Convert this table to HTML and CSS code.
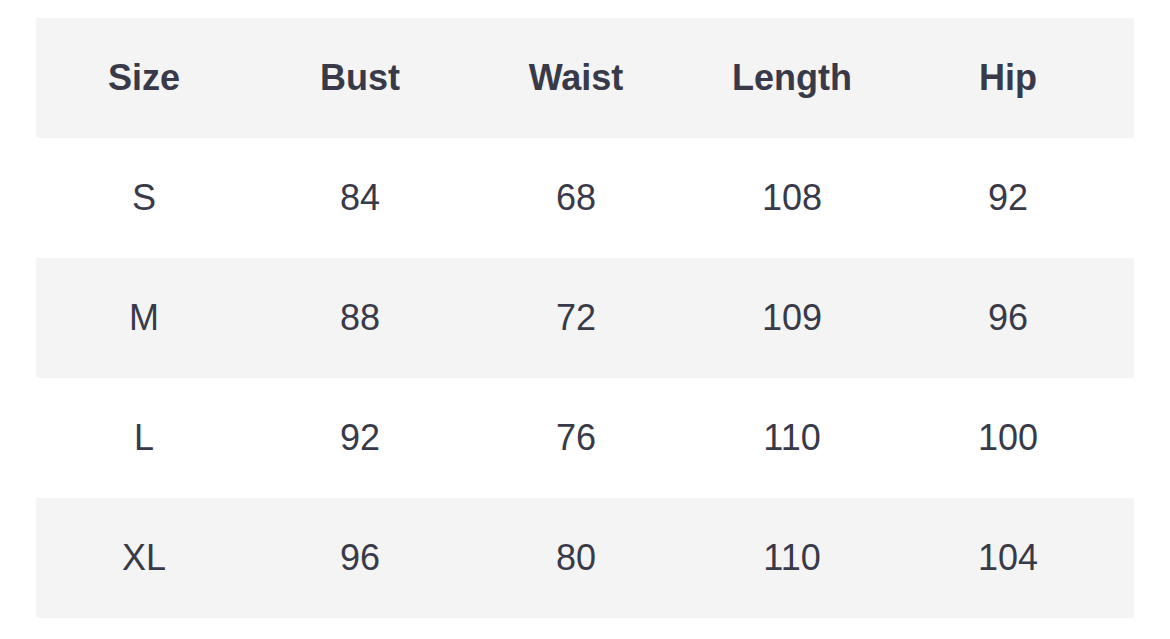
FILE: index.html
```html
<!DOCTYPE html>
<html>
<head>
<meta charset="utf-8">
<link rel="stylesheet" href="styles.css">
</head>
<body>
<div class="table">
  <div class="row head"><div>Size</div><div>Bust</div><div>Waist</div><div>Length</div><div>Hip</div></div>
  <div class="row"><div>S</div><div>84</div><div>68</div><div>108</div><div>92</div></div>
  <div class="row alt"><div>M</div><div>88</div><div>72</div><div>109</div><div>96</div></div>
  <div class="row"><div>L</div><div>92</div><div>76</div><div>110</div><div>100</div></div>
  <div class="row alt"><div>XL</div><div>96</div><div>80</div><div>110</div><div>104</div></div>
</div>
</body>
</html>
```
FILE: styles.css
```css
html, body {
  margin: 0;
  background: #ffffff;
}
body {
  padding: 18px 36px;
  font-family: "Liberation Sans", Arial, Helvetica, sans-serif;
  color: #383a4a;
}
.table {
  width: 1098px;
  display: flex;
  flex-direction: column;
}
.row {
  display: grid;
  grid-template-columns: repeat(5, 216px);
  padding-right: 18px;
  height: 120px;
  align-items: center;
  font-size: 36px;
  line-height: 40px;
}
.row > div {
  text-align: center;
}
.head {
  background: #f4f4f4;
  font-weight: bold;
}
.alt {
  background: #f4f4f4;
}
```
